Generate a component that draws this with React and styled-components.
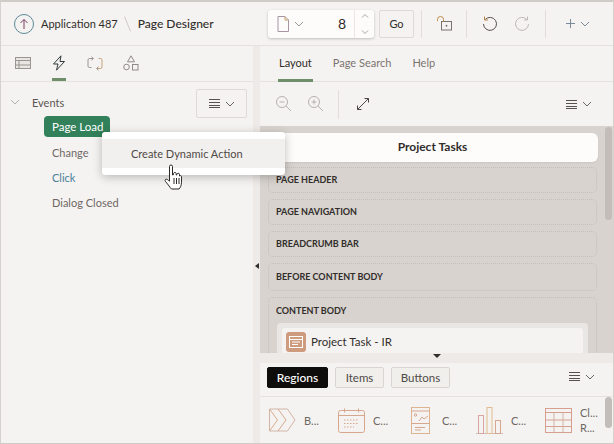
import React from "react";
import styled, { createGlobalStyle } from "styled-components";

const GlobalStyle = createGlobalStyle`
  html, body {
    margin: 0;
    padding: 0;
    background: #f5f3f1;
  }
  * {
    box-sizing: border-box;
  }
`;

const ChevronDown = ({ color = "#6b6662", size = 10 }) => (
  <svg width={size} height={size} viewBox="0 0 10 10" fill="none" stroke={color} strokeWidth="1">
    <path d="M1 3l4 4 4-4" />
  </svg>
);

const MenuLines = () => (
  <svg width="13" height="11" viewBox="0 0 13 11" fill="none" stroke="#57524e" strokeWidth="1">
    <path d="M1 1.500h11M1 4.500h11M1 7.500h11M1 9.500h11" />
  </svg>
);

const TreeMenuIcon = () => (
  <MenuWrap>
    <MenuLines />
    <ChevronDown />
  </MenuWrap>
);

const App = () => {
  return (
    <Frame>
      <GlobalStyle />
      <Header>
        <Crumbs>
          <svg width="22" height="22" viewBox="0 0 22 22" fill="none">
            <circle cx="11" cy="11" r="9.500" stroke="#5c8a96" strokeWidth="1" />
            <path d="M11 16V6.500M7.500 10L11 6.500l3.500 3.500" stroke="#7a3f63" strokeWidth="1" />
          </svg>
          <CrumbLink>Application 487</CrumbLink>
          <CrumbSlash />
          <CrumbTitle>Page Designer</CrumbTitle>
        </Crumbs>
        <PageBox>
          <PageIconPart>
            <svg width="12" height="16" viewBox="0 0 12 16" fill="none" stroke="#a795a6" strokeWidth="1">
              <path d="M1 .5h7l3.500 3.500v11.500H1z" />
              <path d="M8 .5V4h3.500" stroke="#c9a06c" />
            </svg>
            <ChevronDown color="#9a9591" />
          </PageIconPart>
          <PageNumber>8</PageNumber>
          <Stepper>
            <svg width="10" height="22" viewBox="0 0 10 22" fill="none" stroke="#a8a39f" strokeWidth="1">
              <path d="M2 4.500l3-3 3 3M2 17.500l3 3 3-3" />
            </svg>
          </Stepper>
        </PageBox>
        <GoButton>Go</GoButton>
        <HeadSep />
        <HeadIcon $w={44}>
          <svg width="17" height="17" viewBox="0 0 17 17" fill="none" stroke="#57524e" strokeWidth="1">
            <rect x="5.500" y="6.500" width="10" height="8.500" stroke="#7a736e" />
            <path d="M1.500 6V4.500a3 3 0 0 1 6 0V6.500" stroke="#c08a45" />
            <circle cx="10.500" cy="10.800" r=".5" />
          </svg>
        </HeadIcon>
        <HeadSep $left={0.01} />
        <HeadIcon $w={32} $left={7}>
          <svg width="16" height="16" viewBox="0 0 16 16" fill="none" stroke="#57524e" strokeWidth="1">
            <path d="M3.200 3.500A6.500 6.500 0 1 1 1.500 8" />
            <path d="M2.500 .5v3.500H6" stroke="#b9864a" />
          </svg>
        </HeadIcon>
        <HeadIcon $w={32}>
          <svg width="16" height="16" viewBox="0 0 16 16" fill="none" stroke="#bdb9b5" strokeWidth="1">
            <path d="M12.800 3.500A6.500 6.500 0 1 0 14.500 8" />
            <path d="M13.500 .5v3.500H10" />
          </svg>
        </HeadIcon>
        <HeadSep $left={7} />
        <AddButton>
          <svg width="11" height="11" viewBox="0 0 11 11" fill="none" stroke="#7b8a99" strokeWidth="1">
            <path d="M5.500 1v9M1 5.500h9" />
          </svg>
          <ChevronDown color="#7b8a99" />
        </AddButton>
      </Header>

      <Body>
        <LeftPanel>
          <LeftTabs>
            <LeftTab>
              <svg width="16" height="12" viewBox="0 0 16 12" fill="none" stroke="#9a9591" strokeWidth="1">
                <rect x=".5" y=".5" width="15" height="11" fill="#e8e5e2" />
                <path d="M.5 3.500h15M.5 8h15M4 3.500V11.500" />
              </svg>
            </LeftTab>
            <LeftTab $active>
              <svg width="14" height="16" viewBox="0 0 14 16" fill="none" stroke="#2f3a3a" strokeWidth="1">
                <path d="M9 .8L1.500 9H6l-1.500 6.200L12.500 6.500H8z" />
              </svg>
            </LeftTab>
            <LeftTab>
              <svg width="16" height="15" viewBox="0 0 16 15" fill="none" stroke="#9a9591" strokeWidth="1">
                <path d="M6 2.500H2.500a1.500 1.500 0 0 0-1.500 1.500v6a1.500 1.500 0 0 0 1.500 1.500h2" />
                <path d="M10 12.500h3.500a1.500 1.500 0 0 0 1.500-1.500V4a1.500 1.500 0 0 0-1.500-1.500h-2" stroke="#c3a27a" />
                <path d="M4.500 .8L6.500 2.500 4.500 4.200M11.500 10.800L9.500 12.500l2 1.700" />
              </svg>
            </LeftTab>
            <LeftTab>
              <svg width="16" height="16" viewBox="0 0 16 16" fill="none" stroke="#8f8a86" strokeWidth="1">
                <path d="M8 .8l3.500 6h-7z" />
                <circle cx="3.500" cy="12" r="2.800" />
                <rect x="9.500" y="9.500" width="5.500" height="5.500" />
              </svg>
            </LeftTab>
          </LeftTabs>
          <TreeArea>
            <TreeHead>
              <Twist>
                <ChevronDown color="#b5b0ac" />
              </Twist>
              <TreeRoot>Events</TreeRoot>
              <MenuButton>
                <TreeMenuIcon />
              </MenuButton>
            </TreeHead>
            <TreeChildren>
              <SelectedNode>Page Load</SelectedNode>
              <TreeNode>Change</TreeNode>
              <TreeNode $link>Click</TreeNode>
              <TreeNode>Dialog Closed</TreeNode>
            </TreeChildren>
          </TreeArea>
        </LeftPanel>

        <VSplit>
          <VHandle />
        </VSplit>

        <RightPanel>
          <RightTabs>
            <RightTab $active>Layout</RightTab>
            <RightTab>Page Search</RightTab>
            <RightTab>Help</RightTab>
          </RightTabs>
          <LayoutBar>
            <ZoomGroup>
              <svg width="18" height="18" viewBox="0 0 18 18" fill="none" stroke="#b5b1ad" strokeWidth="1">
                <circle cx="7" cy="7" r="5.500" />
                <path d="M11 11l5 5M4.500 7h5" />
              </svg>
              <svg width="18" height="18" viewBox="0 0 18 18" fill="none" stroke="#b5b1ad" strokeWidth="1">
                <circle cx="7" cy="7" r="5.500" />
                <path d="M11 11l5 5M4.500 7h5M7 4.500v5" />
              </svg>
            </ZoomGroup>
            <BarSep />
            <ExpandIcon>
              <svg width="14" height="14" viewBox="0 0 14 14" fill="none" stroke="#4c4743" strokeWidth="1">
                <path d="M1.500 12.500L12.500 1.500M8.500 1.500h4v4M1.500 8.500v4h4" />
              </svg>
            </ExpandIcon>
            <RightMenu>
              <TreeMenuIcon />
            </RightMenu>
          </LayoutBar>
          <Canvas>
            <ScrollThumb $top={1} $h={93} />
            <PageTitle>Project Tasks</PageTitle>
            <Slot $h={26}>PAGE HEADER</Slot>
            <Slot $h={26}>PAGE NAVIGATION</Slot>
            <Slot $h={26}>BREADCRUMB BAR</Slot>
            <Slot $h={28}>BEFORE CONTENT BODY</Slot>
            <BodySlot>
              <SlotLabel>CONTENT BODY</SlotLabel>
              <RegionOuter>
                <RegionInner>
                  <RegionIcon>
                    <svg width="14" height="14" viewBox="0 0 14 14" fill="none" stroke="#fff" strokeWidth="1">
                      <rect x=".5" y="1.500" width="13" height="11" />
                      <path d="M.5 4.500h13M3 7h8M3 9.500h6" />
                    </svg>
                  </RegionIcon>
                  <RegionName>Project Task - IR</RegionName>
                </RegionInner>
              </RegionOuter>
            </BodySlot>
          </Canvas>
          <HSplit>
            <HHandle />
          </HSplit>
          <Gallery>
            <GalleryTabs>
              <GalleryTab $active $w={61}>Regions</GalleryTab>
              <GalleryTab $w={49}>Items</GalleryTab>
              <GalleryTab $w={59}>Buttons</GalleryTab>
              <GalleryMenu>
                <TreeMenuIcon />
              </GalleryMenu>
            </GalleryTabs>
            <GalleryGrid>
              <GalleryItem>
                <GalleryIcon>
                  <svg width="27" height="24" viewBox="0 0 27 24" fill="none" stroke="#d6ab8d" strokeWidth="1">
                    <path d="M.5 1h18l7.500 11-7.500 11H.5z" stroke="#d0b4a8" />
                    <path d="M.5 1l8 11-8 11M9 1l8 11-8 11" />
                  </svg>
                </GalleryIcon>
                <GalleryText>B...</GalleryText>
              </GalleryItem>
              <GalleryItem>
                <GalleryIcon>
                  <svg width="27" height="25" viewBox="0 0 27 25" fill="none" stroke="#d6a78d" strokeWidth="1">
                    <rect x=".5" y="2.500" width="26" height="22" rx="2" />
                    <path d="M.5 7.500h26M6.500 .5v4M20.500 .5v4" />
                    <path d="M6 12h15M6 15.500h15M6 19h10" strokeDasharray="1.500 1.500" />
                  </svg>
                </GalleryIcon>
                <GalleryText>C...</GalleryText>
              </GalleryItem>
              <GalleryItem>
                <GalleryIcon>
                  <svg width="19" height="27" viewBox="0 0 19 27" fill="none" stroke="#d6a78d" strokeWidth="1">
                    <rect x=".5" y=".5" width="18" height="26" stroke="#dcb48f" />
                    <path d="M.5 4h18M.5 16.500h18" />
                    <path d="M8 14l3-4 2 2 4-3M4 20.500h10M4 23h6" />
                    <circle cx="4.500" cy="8" r="1.200" />
                  </svg>
                </GalleryIcon>
                <GalleryText>C...</GalleryText>
              </GalleryItem>
              <GalleryItem>
                <GalleryIcon>
                  <svg width="27" height="27" viewBox="0 0 27 27" fill="none" stroke="#d6a78d" strokeWidth="1">
                    <path d="M0 26.500h27" stroke="#cdbfb8" />
                    <rect x="2.500" y="8.500" width="5" height="18" stroke="#dca4a0" />
                    <rect x="11" y=".5" width="5" height="26" stroke="#e0bc90" />
                    <rect x="19.500" y="13.500" width="5" height="13" />
                  </svg>
                </GalleryIcon>
                <GalleryText>C...</GalleryText>
              </GalleryItem>
              <GalleryItem>
                <GalleryIcon>
                  <svg width="27" height="25" viewBox="0 0 27 25" fill="none" stroke="#d79f8d" strokeWidth="1">
                    <rect x=".5" y=".5" width="26" height="24" />
                    <path d="M.5 4.500h26M.5 12h26M.5 18.500h26" />
                    <path d="M9 4.500v20M18 4.500v20" stroke="#cfb3a8" />
                  </svg>
                </GalleryIcon>
                <GalleryText>
                  Cl...
                  <br />
                  R...
                </GalleryText>
              </GalleryItem>
            </GalleryGrid>
            <ScrollThumb $top={34} $h={31} />
          </Gallery>
        </RightPanel>
      </Body>

      <PopupMenu>
        <PopupItem>Create Dynamic Action</PopupItem>
      </PopupMenu>
      <HandCursor>
        <svg width="19" height="26" viewBox="0 0 19 26" fill="#fff" stroke="#2b2826" strokeWidth="1" strokeLinejoin="round">
          <path d="M5.500 2.500a1.500 1.500 0 0 1 3 0V11l1-.3V9.500a1.400 1.400 0 0 1 2.700 0v1.500l.8-.2v-.6a1.300 1.300 0 0 1 2.500 0V12a1.200 1.200 0 0 1 2 .5v6c0 3-1.500 5.500-2.500 6.500H7.500c-1.500-1.500-3-4-6-7.500-.8-1-.4-2.300.8-2.300.8 0 2 1 3.200 2z" />
          <path d="M10 14v6M12.500 14v6M15 14v6" fill="none" />
        </svg>
      </HandCursor>
    </Frame>
  );
};

const Frame = styled.div`
  position: relative;
  width: 614px;
  height: 444px;
  overflow: hidden;
  display: flex;
  flex-direction: column;
  background: #f5f3f1;
  border-top: 2px solid #cfccc8;
  border-left: 1px solid #d5d2ce;
  border-right: 1px solid #d5d2ce;
  border-bottom: 1px solid #cfccc8;
  font-family: "Lato", "Open Sans", sans-serif;
  font-size: 11px;
  color: #312d2a;
`;

const Header = styled.header`
  height: 44px;
  flex: none;
  display: flex;
  align-items: center;
  border-bottom: 1px solid #e4e1de;
`;

const Crumbs = styled.div`
  width: 267px;
  flex: none;
  display: flex;
  align-items: center;
  padding-left: 12px;
`;

const CrumbLink = styled.span`
  margin-left: 6px;
  font-size: 11px;
`;

const CrumbSlash = styled.span`
  width: 1px;
  height: 16px;
  margin: 0 10px 0 9px;
  background: #cfcbc7;
  transform: rotate(-22deg);
`;

const CrumbTitle = styled.span`
  font-size: 12px;
  font-weight: 500;
`;

const PageBox = styled.div`
  width: 106px;
  height: 28px;
  flex: none;
  display: flex;
  align-items: center;
  background: #fdfcfb;
  border-radius: 3px;
  box-shadow: 0 1px 3px rgba(0, 0, 0, 0.22);
`;

const PageIconPart = styled.div`
  display: flex;
  align-items: center;
  gap: 5px;
  padding-left: 9px;
`;

const PageNumber = styled.span`
  flex: 1;
  text-align: right;
  padding-right: 8px;
  font-size: 14px;
`;

const Stepper = styled.div`
  width: 20px;
  height: 100%;
  display: flex;
  align-items: center;
  justify-content: center;
  border-left: 1px solid #eae7e4;
`;

const GoButton = styled.div`
  width: 35px;
  height: 28px;
  margin-left: 5px;
  flex: none;
  display: flex;
  align-items: center;
  justify-content: center;
  border: 1px solid #dedbd7;
  border-radius: 2px;
`;

const HeadSep = styled.span`
  width: 1px;
  height: 28px;
  flex: none;
  margin-left: ${(props) => props.$left || 7}px;
  background: #e1deda;
`;

const HeadIcon = styled.div`
  width: ${(props) => props.$w}px;
  margin-left: ${(props) => props.$left || 0}px;
  flex: none;
  display: flex;
  justify-content: center;
`;

const AddButton = styled.div`
  margin-left: 19px;
  display: flex;
  align-items: center;
  gap: 4px;
`;

const Body = styled.div`
  flex: 1;
  min-height: 0;
  display: flex;
`;

const LeftPanel = styled.section`
  width: 252px;
  flex: none;
  display: flex;
  flex-direction: column;
`;

const LeftTabs = styled.div`
  height: 36px;
  flex: none;
  display: flex;
  padding-left: 7px;
  gap: 6px;
  border-bottom: 1px solid #e4e1de;
`;

const LeftTab = styled.div`
  width: 30px;
  display: flex;
  align-items: center;
  justify-content: center;
  padding-bottom: 1px;
  background: ${(props) =>
    props.$active
      ? "linear-gradient(#6f8f6b, #6f8f6b) center bottom / 14px 3px no-repeat"
      : "none"};
`;

const TreeArea = styled.div`
  flex: 1;
  padding: 7px 6px 0 0;
`;

const TreeHead = styled.div`
  display: flex;
  align-items: center;
  height: 29px;
`;

const Twist = styled.span`
  width: 31px;
  padding-left: 9px;
  padding-bottom: 3px;
  display: flex;
`;

const TreeRoot = styled.span`
  flex: 1;
  padding-bottom: 3px;
  color: #5b5652;
`;

const MenuButton = styled.div`
  width: 51px;
  height: 29px;
  display: flex;
  align-items: center;
  justify-content: center;
  border: 1px solid #dedbd7;
  border-radius: 2px;
`;

const MenuWrap = styled.span`
  display: flex;
  align-items: center;
  gap: 4px;
`;

const TreeChildren = styled.div`
  display: flex;
  flex-direction: column;
  align-items: flex-start;
  padding-left: 43px;
`;

const SelectedNode = styled.div`
  height: 21px;
  width: 66px;
  margin-top: -2px;
  padding-left: 8px;
  display: flex;
  align-items: center;
  border-radius: 4px;
  background: #32815a;
  color: #fff;
  font-size: 11.5px;
`;

const TreeNode = styled.div`
  height: 25px;
  padding-left: 8px;
  display: flex;
  align-items: center;
  color: ${(props) => (props.$link ? "#4a7f9a" : "#6e6864")};

  ${SelectedNode} + & {
    margin-top: 3px;
  }
`;

const VSplit = styled.div`
  width: 7px;
  flex: none;
  display: flex;
  align-items: center;
  justify-content: center;
  background: #edeae7;
`;

const VHandle = styled.span`
  width: 0;
  height: 0;
  margin-top: 43px;
  border-top: 3px solid transparent;
  border-bottom: 3px solid transparent;
  border-right: 4px solid #312d2a;
`;

const RightPanel = styled.section`
  flex: 1;
  min-width: 0;
  display: flex;
  flex-direction: column;
`;

const RightTabs = styled.div`
  height: 36px;
  flex: none;
  display: flex;
  padding-left: 18px;
  gap: 19px;
  border-bottom: 1px solid #e4e1de;
`;

const RightTab = styled.div`
  height: 36px;
  display: flex;
  align-items: center;
  padding: 0 1px 1px;
  color: ${(props) => (props.$active ? "#312d2a" : "#7a7470")};
  border-bottom: 3px solid ${(props) => (props.$active ? "#6f8f6b" : "transparent")};
`;

const LayoutBar = styled.div`
  height: 44px;
  flex: none;
  display: flex;
  align-items: center;
  padding-left: 15px;
`;

const ZoomGroup = styled.div`
  display: flex;
  gap: 14px;
`;

const BarSep = styled.span`
  width: 1px;
  height: 29px;
  margin-left: 13px;
  background: #e1deda;
`;

const ExpandIcon = styled.div`
  margin-left: 17px;
  display: flex;
`;

const RightMenu = styled.div`
  margin-left: auto;
  margin-right: 21px;
`;

const Canvas = styled.div`
  position: relative;
  flex: 1;
  min-height: 0;
  overflow: hidden;
  display: flex;
  flex-direction: column;
  gap: 6px;
  padding: 7px 15px 0 7px;
  background: #d8d3cf;
`;

const ScrollThumb = styled.span`
  position: absolute;
  top: ${(props) => props.$top}px;
  right: 1px;
  width: 7px;
  height: ${(props) => props.$h}px;
  border-radius: 4px;
  background: #c2bdb9;
`;

const PageTitle = styled.div`
  height: 29px;
  flex: none;
  display: flex;
  align-items: center;
  justify-content: center;
  padding-bottom: 2px;
  background: #fdfcfb;
  border-radius: 6px;
  font-size: 12px;
  font-weight: 700;
  margin-bottom: -1px;
  box-shadow: 0 1px 2px rgba(0, 0, 0, 0.06);
`;

const Slot = styled.div`
  height: ${(props) => props.$h}px;
  flex: none;
  display: flex;
  align-items: center;
  margin: 0 1px;
  padding-left: 7px;
  padding-bottom: 1px;
  border: 1px dotted #c4bfba;
  border-radius: 5px;
  font-size: 9px;
  font-weight: 700;
`;

const BodySlot = styled.div`
  flex: none;
  height: 80px;
  margin: 0 1px;
  padding: 0 8px;
  border: 1px dotted #c4bfba;
  border-radius: 5px;
`;

const SlotLabel = styled.div`
  height: 25px;
  margin-left: -1px;
  display: flex;
  align-items: center;
  font-size: 9px;
  font-weight: 700;
`;

const RegionOuter = styled.div`
  height: 60px;
  padding: 5px;
  background: #e9e6e3;
  border-radius: 4px;
`;

const RegionInner = styled.div`
  display: flex;
  align-items: flex-start;
  height: 50px;
  padding: 4px;
  background: #f5f3f1;
  border-radius: 3px;
`;

const RegionIcon = styled.div`
  width: 20px;
  height: 20px;
  display: flex;
  align-items: center;
  justify-content: center;
  background: #ce9b7f;
  border-radius: 3px;
`;

const RegionName = styled.span`
  margin-left: 5px;
  line-height: 20px;
  font-size: 11.5px;
`;

const HSplit = styled.div`
  height: 10px;
  flex: none;
  display: flex;
  justify-content: center;
  background: #edeae7;
`;

const HHandle = styled.span`
  width: 0;
  height: 0;
  margin-top: 1px;
  border-left: 4px solid transparent;
  border-right: 4px solid transparent;
  border-top: 4px solid #312d2a;
`;

const Gallery = styled.div`
  position: relative;
  height: 80px;
  flex: none;
  display: flex;
  flex-direction: column;
`;

const GalleryTabs = styled.div`
  height: 34px;
  flex: none;
  display: flex;
  align-items: flex-start;
  gap: 7px;
  padding: 4px 0 0 7px;
  border-bottom: 1px solid #e4e1de;
`;

const GalleryTab = styled.div`
  width: ${(props) => props.$w}px;
  height: 21px;
  display: flex;
  align-items: center;
  justify-content: center;
  padding-bottom: 1px;
  border-radius: 2px;
  font-size: ${(props) => (props.$active ? 12 : 11.5)}px;
  background: ${(props) => (props.$active ? "#0f0d0c" : "#f1efec")};
  color: ${(props) => (props.$active ? "#fff" : "#4f4a46")};
  font-weight: ${(props) => (props.$active ? 500 : 400)};
  border: 1px solid ${(props) => (props.$active ? "#0f0d0c" : "#d9d6d2")};
`;

const GalleryMenu = styled.div`
  margin: 4px 18px 0 auto;
`;

const GalleryGrid = styled.div`
  flex: 1;
  display: grid;
  grid-template-columns: repeat(5, 69px);
  padding-left: 8px;
  align-items: center;
`;

const GalleryItem = styled.div`
  display: flex;
  align-items: center;
`;

const GalleryIcon = styled.div`
  width: 28px;
  display: flex;
  justify-content: center;
`;

const GalleryText = styled.span`
  margin-left: 8px;
  line-height: 15px;
  color: #6e6864;
`;

const PopupMenu = styled.div`
  position: absolute;
  left: 101px;
  top: 130px;
  width: 183px;
  height: 43px;
  padding: 7px 0;
  background: #fff;
  border-radius: 3px;
  box-shadow: 0 2px 10px rgba(0, 0, 0, 0.25);
`;

const PopupItem = styled.div`
  height: 29px;
  padding-left: 29px;
  display: flex;
  align-items: center;
  background: #f2f0ee;
  color: #4f4a46;
`;

const HandCursor = styled.div`
  position: absolute;
  left: 163px;
  top: 162px;
  display: flex;
`;

export default App;
